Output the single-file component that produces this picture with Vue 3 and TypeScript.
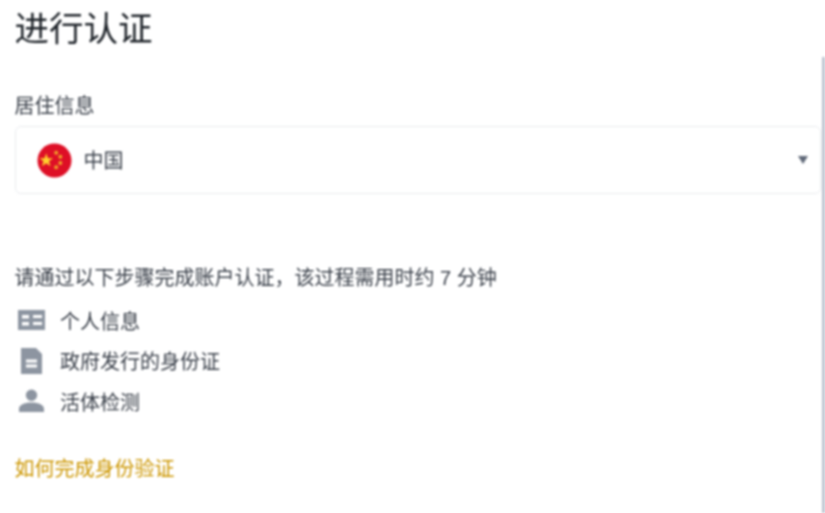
<script setup lang="ts">
const steps = [
  { id: 'info', label: '个人信息' },
  { id: 'doc', label: '政府发行的身份证' },
  { id: 'face', label: '活体检测' },
]
</script>

<template>
  <div class="page">
    <h1 class="title">进行认证</h1>
    <label class="label">居住信息</label>
    <div class="select">
      <svg class="flag" viewBox="0 0 36 36">
        <circle cx="18" cy="18" r="17.5" fill="#de0f26" />
        <polygon
          fill="#ffd22e"
          points="9.500,10.500 11.200,15.600 16.500,15.600 12.300,18.800 13.900,24 9.500,20.900 5.100,24 6.700,18.800 2.500,15.600 7.800,15.600"
        />
        <circle cx="19.700" cy="10" r="2" fill="#f0a52a" />
        <circle cx="24" cy="14.200" r="2" fill="#f0a52a" />
        <circle cx="24" cy="20.500" r="2" fill="#f0a52a" />
        <circle cx="19.700" cy="25" r="2" fill="#f0a52a" />
      </svg>
      <span class="country">中国</span>
      <span class="caret"></span>
    </div>
    <p class="intro">请通过以下步骤完成账户认证，该过程需用时约 7 分钟</p>
    <ul class="steps">
      <li v-for="step in steps" :key="step.id" class="step">
        <svg class="icon" viewBox="0 0 30 30">
          <path
            v-if="step.id === 'info'"
            fill-rule="evenodd"
            d="M1 5h27v20H1zM5 10v3.500h7v-3.500zM16 10v3h9v-3zM5 17v3.500h7v-3.500zM16 17v3h9v-3z"
          />
          <path
            v-else-if="step.id === 'doc'"
            fill-rule="evenodd"
            d="M4 2h15l6 6v20H4zM9 13.500v3h11v-3zM9 18.500v3h11v-3z"
          />
          <path
            v-else
            d="M14.500 3.500a5.700 5.700 0 1 1 0 11.400a5.700 5.700 0 1 1 0-11.400zM2 26v-3c0-4 5-6.500 12.500-6.500s12.500 2.500 12.500 6.500v3z"
          />
        </svg>
        <span class="step-label">{{ step.label }}</span>
      </li>
    </ul>
    <a class="link">如何完成身份验证</a>
    <div class="scrollbar"></div>
  </div>
</template>

<style scoped>
.page {
  position: relative;
  height: 513px;
  box-sizing: border-box;
  overflow: hidden;
  padding: 7px 0 0 14.5px;
  font-family: "Liberation Sans", "Noto Sans CJK SC", sans-serif;
  color: #3a404a;
  filter: blur(0.8px);
}

.title {
  margin: 0;
  font-size: 34.500px;
  line-height: 44px;
  font-weight: 400;
  color: #1e2329;
}

.label {
  display: block;
  margin-top: 42px;
  font-size: 20px;
  line-height: 26px;
}

.select {
  display: flex;
  align-items: center;
  width: 806px;
  height: 68px;
  margin-top: 7px;
  padding: 0 12px 0 21px;
  box-sizing: border-box;
  border: 1px solid #e9ebee;
  border-radius: 6px;
}

.flag {
  width: 35px;
  height: 35px;
  flex-shrink: 0;
}

.country {
  margin-left: 12px;
  margin-top: -1px;
  font-size: 20px;
}

.caret {
  margin-left: auto;
  margin-top: -1px;
  border-left: 5.500px solid transparent;
  border-right: 5.500px solid transparent;
  border-top: 8px solid #5f6878;
}

.intro {
  margin: 71px 0 0;
  font-size: 20px;
  line-height: 26px;
}

.steps {
  list-style: none;
  margin: 9px 0 0;
  padding: 0;
}

.step {
  display: flex;
  align-items: center;
  height: 40.5px;
}

.icon {
  width: 30px;
  height: 30px;
  margin-left: 2.5px;
  fill: #8d95a1;
  flex-shrink: 0;
}

.step-label {
  margin-left: 13px;
  font-size: 20px;
}

.link {
  display: block;
  margin-top: 34px;
  font-size: 20px;
  line-height: 26px;
  color: #cc9600;
}

.scrollbar {
  position: absolute;
  top: 57px;
  right: 0;
  bottom: 0;
  width: 3px;
  background: #bcc3cf;
}
</style>
